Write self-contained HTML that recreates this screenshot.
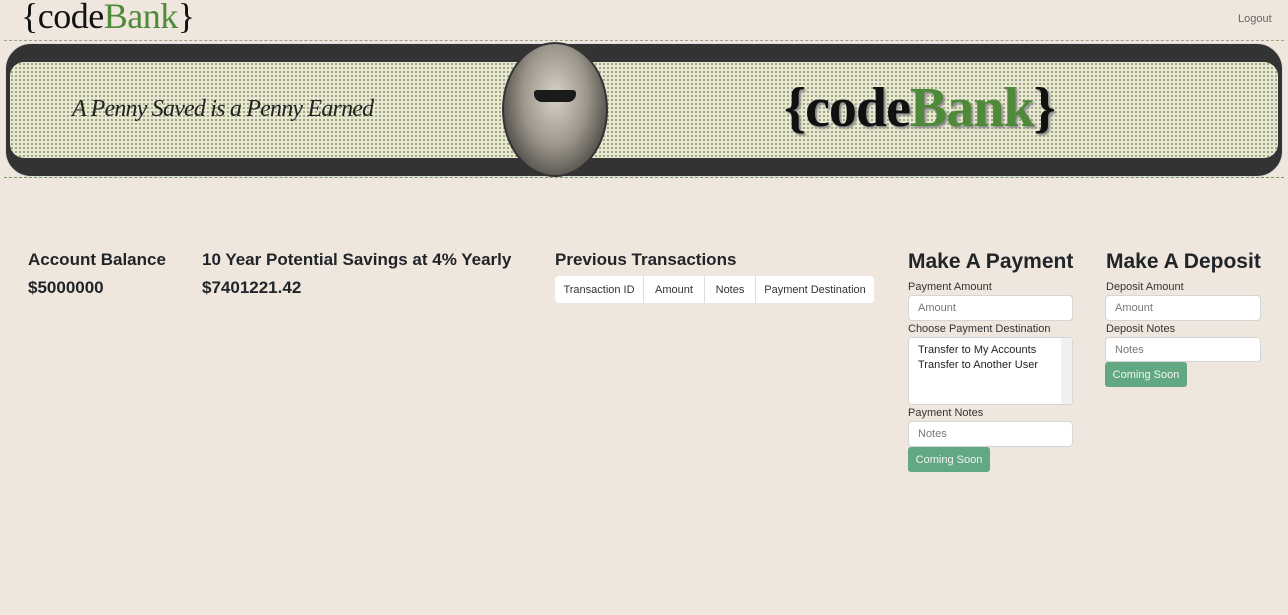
<!DOCTYPE html>
<html><head><meta charset="utf-8">
<style>
body{margin:0;width:1288px;height:615px;background:#efe6dd;font-family:"Liberation Sans",sans-serif;color:#212529;position:relative;overflow:hidden}
.a{position:absolute;white-space:nowrap}
.logo{font-family:"Liberation Serif",serif}
h{position:absolute;font-weight:bold;white-space:nowrap}
.lbl{position:absolute;font-size:11px;color:#333}
.inp{position:absolute;background:#fff;border:1px solid #d5d5d5;border-radius:4px;font-size:11px;color:#777;box-sizing:border-box;padding:0 9px;display:flex;align-items:center}
.btn{position:absolute;background:#62a883;color:#f4f4f4;border-radius:3px;font-size:11px;display:flex;align-items:center;justify-content:center}
.dots{background-color:#ece6d6;background-image:radial-gradient(#7a9a5a 0.8px,transparent 1px);background-size:4px 4px}
</style></head><body>
<div class="a logo" style="left:21px;top:-5px;font-size:36px;color:#111;letter-spacing:-0.5px">{code<span style="color:#4f8a3b">Bank</span>}</div>
<div class="a" style="left:1238px;top:13px;font-size:11px;color:#666">Logout</div>

<div class="a" style="left:4px;top:40px;width:1280px;height:138px;border-top:1px dashed #9aa38a;border-bottom:1px dashed #7a9a5a;box-sizing:border-box"></div>
<div class="a" style="left:5px;top:43px;width:1278px;height:134px;background:#333;border-radius:26px;border:1px solid #ddd;box-sizing:border-box"></div>
<div class="a dots" style="left:10px;top:62px;width:1268px;height:96px;border-radius:14px"></div>
<div class="a" style="left:72px;top:96px;font-family:'Liberation Serif',serif;font-style:italic;font-size:24px;color:#222;letter-spacing:-0.8px">A Penny Saved is a Penny Earned</div>
<div class="a" style="left:502px;top:42px;width:106px;height:135px;border-radius:50%;background:radial-gradient(ellipse at 50% 40%,#d8d3c8 0%,#9b958a 45%,#4a4742 80%,#2c2b28 100%);border:2px solid #333;box-sizing:border-box"></div>
<div class="a" style="left:534px;top:90px;width:42px;height:12px;background:#1a1a1a;border-radius:3px 3px 8px 8px"></div>
<div class="a logo" style="left:784px;top:76px;font-size:56px;font-weight:bold;color:#111;text-shadow:2px 2px 2px #888;letter-spacing:-1px">{code<span style="color:#4f8a3b">Bank</span>}</div>

<h style="left:28px;top:250px;font-size:17px">Account Balance</h>
<h style="left:28px;top:278px;font-size:17px">$5000000</h>
<h style="left:202px;top:250px;font-size:17px">10 Year Potential Savings at 4% Yearly</h>
<h style="left:202px;top:278px;font-size:17px">$7401221.42</h>
<h style="left:555px;top:250px;font-size:17px">Previous Transactions</h>
<div class="a" style="left:555px;top:276px;width:319px;height:27px;background:#fff;border-radius:4px;display:flex;font-size:11px;color:#333">
<div style="width:88px;border-right:1px solid #ddd;display:flex;align-items:center;justify-content:center">Transaction ID</div>
<div style="width:60px;border-right:1px solid #ddd;display:flex;align-items:center;justify-content:center">Amount</div>
<div style="width:50px;border-right:1px solid #ddd;display:flex;align-items:center;justify-content:center">Notes</div>
<div style="flex:1;display:flex;align-items:center;justify-content:center">Payment Destination</div></div>

<h style="left:908px;top:250px;font-size:21px;font-weight:600">Make A Payment</h>
<div class="lbl" style="left:908px;top:281px">Payment Amount</div>
<div class="inp" style="left:908px;top:295px;width:165px;height:26px">Amount</div>
<div class="lbl" style="left:908px;top:323px">Choose Payment Destination</div>
<div class="inp" style="left:908px;top:337px;width:165px;height:68px;align-items:flex-start;padding-top:5px;color:#222;line-height:15px;display:block">Transfer to My Accounts<br>Transfer to Another User
<div style="position:absolute;right:0;top:0;width:11px;height:66px;background:#f0f0f0"></div></div>
<div class="lbl" style="left:908px;top:407px">Payment Notes</div>
<div class="inp" style="left:908px;top:421px;width:165px;height:26px">Notes</div>
<div class="btn" style="left:908px;top:447px;width:82px;height:25px">Coming Soon</div>

<h style="left:1106px;top:250px;font-size:21px;font-weight:600">Make A Deposit</h>
<div class="lbl" style="left:1106px;top:281px">Deposit Amount</div>
<div class="inp" style="left:1105px;top:295px;width:156px;height:26px">Amount</div>
<div class="lbl" style="left:1106px;top:323px">Deposit Notes</div>
<div class="inp" style="left:1105px;top:337px;width:156px;height:25px">Notes</div>
<div class="btn" style="left:1105px;top:362px;width:82px;height:25px">Coming Soon</div>
</body></html>
